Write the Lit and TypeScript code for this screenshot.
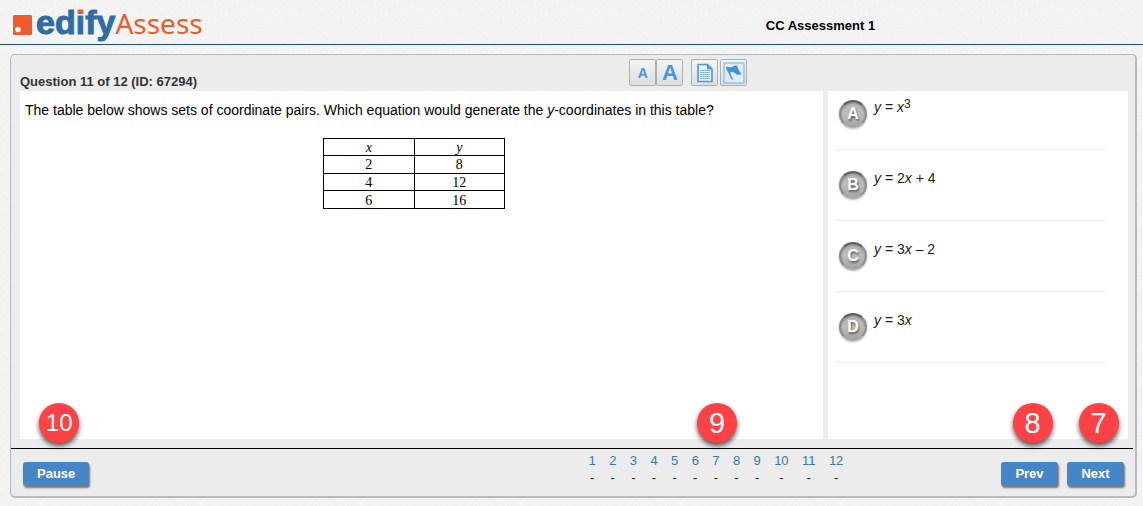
import { LitElement, html, css, svg } from "lit";
import { customElement, property, state } from "lit/decorators.js";

const PAPER =
  "data:image/svg+xml,%3Csvg xmlns='http://www.w3.org/2000/svg' width='160' height='160'%3E%3Cfilter id='n'%3E%3CfeTurbulence type='fractalNoise' baseFrequency='.35' numOctaves='3' stitchTiles='stitch'/%3E%3CfeColorMatrix values='0 0 0 0 1 0 0 0 0 1 0 0 0 0 1 .5 0 0 0 0'/%3E%3C/filter%3E%3Crect width='160' height='160' filter='url(%23n)'/%3E%3C/svg%3E";

@customElement("step-badge")
export class StepBadge extends LitElement {
  @property() value = "";

  static styles = css`
    :host {
      display: flex;
      align-items: center;
      justify-content: center;
      width: 40px;
      height: 40px;
      border-radius: 50%;
      background: #fd4144;
      color: #fff;
      font: 29px/40px "Liberation Sans", Arial, sans-serif;
      box-shadow: 0 3px 5px rgba(0, 0, 0, 0.65);
    }
    .small {
      font-size: 24px;
    }
  `;

  render() {
    return html`<span class=${this.value.length > 1 ? "small" : ""}>${this.value}</span>`;
  }
}

@customElement("answer-option")
export class AnswerOption extends LitElement {
  @property() letter = "";

  static styles = css`
    :host {
      display: block;
      padding: 13px 0 21px;
      border-bottom: 1px solid #ececec;
    }
    .row {
      display: flex;
      gap: 7px;
      padding: 0 2px;
      cursor: pointer;
    }
    .bubble {
      display: grid;
      flex: none;
      width: 28px;
      height: 28px;
      margin-top: 8px;
    }
    .radio,
    .letter {
      grid-area: 1 / 1;
    }
    .radio {
      appearance: none;
      box-sizing: border-box;
      width: 28px;
      height: 28px;
      margin: 0;
      border: 2px solid;
      border-color: #5f5f5f #8e8e8e #a8a8a8 #8a8a8a;
      border-radius: 50%;
      background: linear-gradient(#b4b4b4, #bdbdbd 50%, #a6a6a6);
      box-shadow: 0 1px 2px rgba(0, 0, 0, 0.3), inset 0 1px 2px rgba(0, 0, 0, 0.35);
    }
    .letter {
      place-self: center;
      z-index: 1;
      font-weight: bold;
      font-size: 16px;
      line-height: 16px;
      color: #fff;
      text-shadow: 1px 2px 2px rgba(0, 0, 0, 0.45);
    }
    .text {
      padding-top: 6px;
      line-height: 18px;
    }
  `;

  render() {
    return html`<label class="row">
      <span class="bubble">
        <input class="radio" type="radio" name="answer" value=${this.letter} />
        <span class="letter">${this.letter}</span>
      </span>
      <span class="text"><slot></slot></span>
    </label>`;
  }
}

const documentIcon = svg`<svg width="18" height="20" viewBox="0 0 18 20" aria-hidden="true">
  <path d="M2 1.500h9.500l4.500 4.500v12.500h-14z" fill="#eaf2f9" stroke="#4796de" stroke-width="1.600"/>
  <path d="M11.500 1.500v4.500h4.500z" fill="#4796de" stroke="#4796de"/>
  <path d="M4.500 7.500h9M4.500 9.500h9M4.500 11.500h9M4.500 13.500h9M4.500 15.500h9" stroke="#4796de" stroke-dasharray="1.300 .7"/>
</svg>`;

const flagIcon = svg`<svg width="22" height="22" viewBox="0 0 22 22" aria-hidden="true">
  <rect x="1" y="1" width="20" height="20" fill="#e2ebf3" stroke="#8cc0ee" stroke-width="1.400"/>
  <path d="M3.300 5.200l6.200 12.300" stroke="#4796de" stroke-width="1.500" fill="none"/>
  <path d="M3.800 4.600C6 5.800 8.500 5.400 10 4.400S13.800 3 14.500 4.200c.3 1 0 1.600.5 2.400 1 2 1.600 3.400 3.400 5.200-1.400 1-3 1.200-4.600.6-1.800-.8-3-2.600-4.600-2.600-1.200 0-1.400 1.200-2.200 2z" fill="#3f8fda"/>
</svg>`;

@customElement("app-root")
export class AppRoot extends LitElement {
  @state() private large = false;

  private rows = [[2, 8], [4, 12], [6, 16]];
  private questions = Array.from({ length: 12 }, (_, i) => i + 1);

  static styles = css`
    :host {
      display: flex;
      flex-direction: column;
      box-sizing: border-box;
      min-height: 100vh;
      padding-bottom: 8px;
      background-color: #efefef;
      font-family: "Liberation Sans", Arial, sans-serif;
      font-size: 14px;
      color: #222;
    }
    .header {
      display: flex;
      height: 44px;
      border-bottom: 1px solid #1b4f80;
    }
    .brand {
      display: flex;
      flex: 0 0 67%;
      box-sizing: border-box;
      padding: 4px 0 0 13px;
      gap: 4px;
    }
    .mark {
      flex: none;
      margin-top: 11px;
    }
    .logo {
      display: flex;
      align-items: baseline;
      line-height: 36px;
      white-space: nowrap;
    }
    .edify {
      font-size: 34px;
      font-weight: bold;
      color: #2f6ca5;
      -webkit-text-stroke: 1px #2f6ca5;
    }
    .i {
      background: linear-gradient(#f15a29 11px, #2f6ca5 11px);
      background-clip: text;
      -webkit-background-clip: text;
      -webkit-text-stroke-color: transparent;
      color: transparent;
    }
    .assess {
      font-family: "Noto Sans", "Open Sans", sans-serif;
      font-size: 28px;
      color: #f15a29;
    }
    .title {
      margin: 0;
      padding-top: 18px;
      font-size: 13px;
      line-height: 16px;
      color: #000;
    }
    .panel {
      display: flex;
      flex: 1;
      flex-direction: column;
      margin: 9px 6px 0 10px;
      border: 1px solid #b4bbc3;
      border-right-width: 2px;
      border-bottom-width: 2px;
      border-radius: 5px;
      background: #ececec;
    }
    .bar {
      display: grid;
      grid-template-columns: 55% 1fr;
      height: 36px;
      padding: 0 7px 0 9px;
    }
    .count {
      margin: 0;
      padding-top: 19px;
      font-size: 13px;
      line-height: 16px;
      color: #333;
    }
    .tools {
      display: flex;
      padding-top: 4px;
    }
    .tool {
      display: flex;
      align-items: center;
      justify-content: center;
      box-sizing: border-box;
      width: 27px;
      height: 27px;
      padding: 0;
      border: 1px solid #b0b0b0;
      border-radius: 2px;
      background: linear-gradient(#f4f4f4, #dedede);
      color: #4796de;
      font: bold 14px "Liberation Sans", Arial, sans-serif;
    }
    .tool.big {
      font-size: 22px;
    }
    .tool.doc {
      margin: 0 2px 0 8px;
    }
    .main {
      display: grid;
      flex: 1;
      grid-template-columns: minmax(0, 1fr) 300px;
      gap: 5px;
      padding: 0 7px 9px 9px;
    }
    .question {
      padding: 10px 20px 0 5px;
      background: #fff;
      color: #000;
    }
    .prompt {
      margin: 0 0 19px;
      line-height: 18px;
    }
    .prompt.zoomed {
      font-size: 18px;
    }
    .pairs {
      width: 182px;
      height: 71px;
      margin: 0 auto;
      border-collapse: collapse;
      table-layout: fixed;
      font-family: "Liberation Serif", "Times New Roman", serif;
      font-size: 14px;
      line-height: 15px;
      text-align: center;
    }
    .pairs th,
    .pairs td {
      padding: 1px 0 0;
      border: 1px solid #000;
      font-weight: normal;
    }
    .pairs th {
      font-style: italic;
    }
    .answers {
      margin: 0;
      padding: 1px 23px 0 9px;
      border: 0;
      min-width: 0;
      background: #fff;
    }
    answer-option:first-of-type {
      padding-top: 0;
    }
    .sup {
      font-size: 12px;
      line-height: 0;
      vertical-align: 4px;
    }
    .footer {
      display: flex;
      height: 47px;
      margin-right: 2px;
      padding: 0 9px 0 12px;
      border-top: 1px solid #000;
    }
    .start {
      flex: 0 0 51%;
    }
    .start,
    .end {
      display: flex;
      align-items: flex-start;
      padding-top: 13px;
    }
    .end {
      gap: 9px;
      margin-left: auto;
    }
    .anchor {
      position: relative;
    }
    .badge {
      position: absolute;
      left: calc(50% - 17px);
      bottom: 43px;
    }
    .btn {
      min-width: 57px;
      height: 24px;
      padding: 0 14px;
      border: 0;
      border-radius: 3px;
      background: #4686c6;
      box-shadow: 1px 2px 2px rgba(0, 0, 0, 0.5);
      color: #fff;
      font: bold 13px/24px "Liberation Sans", Arial, sans-serif;
    }
    .pages {
      position: relative;
      align-self: flex-start;
      padding: 3px 0 0 4px;
    }
    .list {
      display: flex;
      justify-content: space-between;
      width: 255px;
      margin: 0;
      padding: 0;
      list-style: none;
      font-size: 13px;
      line-height: 17px;
      text-align: center;
    }
    .link {
      display: block;
      color: #337ab7;
      text-decoration: none;
    }
  `;

  render() {
    return html`
      <style>
        :host {
          background-image: url("${PAPER}");
        }
      </style>
      <header class="header">
        <div class="brand">
          <svg class="mark" width="19" height="20" viewBox="0 0 19 20" aria-hidden="true">
            <rect width="19" height="20" rx="1.500" fill="#f15a29" />
            <circle cx="5" cy="14.500" r="2.800" fill="#fff" />
          </svg>
          <div class="logo">
            <span class="edify">ed<span class="i">i</span>fy</span><span class="assess">Assess</span>
          </div>
        </div>
        <h1 class="title">CC Assessment 1</h1>
      </header>
      <main class="panel">
        <div class="bar">
          <h2 class="count">Question 11 of 12 (ID: 67294)</h2>
          <div class="tools">
            <button class="tool" aria-label="Smaller text" @click=${() => (this.large = false)}>A</button>
            <button class="tool big" aria-label="Larger text" @click=${() => (this.large = true)}>A</button>
            <button class="tool doc" aria-label="Notes">${documentIcon}</button>
            <button class="tool" aria-label="Flag question">${flagIcon}</button>
          </div>
        </div>
        <div class="main">
          <section class="question">
            <p class="prompt ${this.large ? "zoomed" : ""}">The table below shows sets of coordinate pairs. Which equation would generate the <i>y</i>-coordinates in this table?</p>
            <table class="pairs">
              <thead><tr><th scope="col">x</th><th scope="col">y</th></tr></thead>
              <tbody>${this.rows.map(([x, y]) => html`<tr><td>${x}</td><td>${y}</td></tr>`)}</tbody>
            </table>
          </section>
          <fieldset class="answers" aria-label="Answers">
            <answer-option letter="A"><i>y</i> = <i>x</i><span class="sup">3</span></answer-option>
            <answer-option letter="B"><i>y</i> = 2<i>x</i> + 4</answer-option>
            <answer-option letter="C"><i>y</i> = 3<i>x</i> – 2</answer-option>
            <answer-option letter="D"><i>y</i> = 3<i>x</i></answer-option>
          </fieldset>
        </div>
        <footer class="footer">
          <div class="start">
            <div class="anchor"><button class="btn">Pause</button><step-badge class="badge" value="10"></step-badge></div>
          </div>
          <nav class="pages" aria-label="Questions">
            <ol class="list">
              ${this.questions.map((n) => html`<li><a class="link" href="#q${n}">${n}</a>-</li>`)}
            </ol>
            <step-badge class="badge" value="9"></step-badge>
          </nav>
          <div class="end">
            <div class="anchor"><button class="btn">Prev</button><step-badge class="badge" value="8"></step-badge></div>
            <div class="anchor"><button class="btn">Next</button><step-badge class="badge" value="7"></step-badge></div>
          </div>
        </footer>
      </main>
    `;
  }
}
